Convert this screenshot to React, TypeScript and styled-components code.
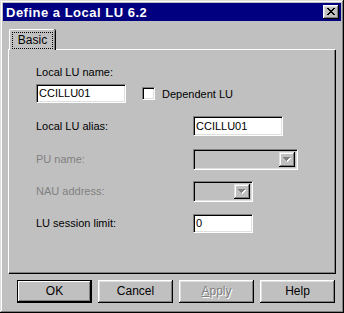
import React from 'react';
import styled, { createGlobalStyle } from 'styled-components';

const GlobalStyle = createGlobalStyle`
    html, body {
        margin: 0;
        padding: 0;
        background: #c0c0c0;
    }
    * {
        box-sizing: border-box;
    }
`;

const FONT = `'Liberation Sans', Arial, sans-serif`;

const Window = styled.div`
    width: 344px;
    height: 313px;
    padding: 3px;
    background: #c0c0c0;
    font-family: ${FONT};
    font-size: 11px;
    color: #000;
    box-shadow: inset -1px -1px #000, inset 1px 1px #dfdfdf, inset -2px -2px #808080, inset 2px 2px #fff;
    display: flex;
    flex-direction: column;
`;

const TitleBar = styled.div`
    height: 18px;
    background: #000080;
    color: #fff;
    font-weight: bold;
    font-size: 13px;
    letter-spacing: 0.5px;
    display: flex;
    align-items: center;
    justify-content: space-between;
    padding: 0 2px 0 3px;
`;

const CloseButton = styled.div`
    width: 16px;
    height: 14px;
    background: #c0c0c0;
    box-shadow: inset -1px -1px #000, inset 1px 1px #fff, inset -2px -2px #808080, inset 2px 2px #dfdfdf;
    display: flex;
    align-items: center;
    justify-content: center;
    padding: 0 1px 1px 0;
`;

const Body = styled.div`
    padding: 8px 6px 0 5px;
`;

const TabStrip = styled.div`
    display: flex;
    padding-left: 1px;
    position: relative;
    z-index: 1;
    margin-bottom: -1px;
`;

const Tab = styled.div`
    width: 46px;
    height: 21px;
    background: #c0c0c0;
    border-top: 1px solid #fff;
    border-left: 1px solid #fff;
    border-top-left-radius: 2px;
    border-top-right-radius: 2px;
    box-shadow: inset -1px 0 #808080, 1px 0 #000;
    padding: 2px 2px 0 2px;
    font-size: 12px;
`;

const TabFocus = styled.div`
    border: 1px dotted #000;
    height: 17px;
    display: flex;
    align-items: center;
    justify-content: center;
    padding-bottom: 1px;
`;

const Panel = styled.div`
    width: 327px;
    height: 224px;
    border-top: 1px solid #fff;
    border-left: 1px solid #fff;
    box-shadow: inset -1px -1px #808080, 1px 1px #000;
    padding: 16px 0 0 27px;
`;

const FieldLabel = styled.div<{ $disabled?: boolean }>`
    height: 13px;
    line-height: 13px;
    color: ${(p) => (p.$disabled ? '#808080' : '#000')};
    white-space: nowrap;
`;

const Row = styled.div<{ $h: number; $top: number }>`
    display: grid;
    grid-template-columns: 157px auto;
    align-items: center;
    height: ${(p) => p.$h}px;
    margin-top: ${(p) => p.$top}px;
`;

const InlineRow = styled.div`
    display: flex;
    align-items: center;
    height: 19px;
    margin-top: 5px;
`;

const TextBox = styled.div<{ $w: number; $h: number }>`
    width: ${(p) => p.$w}px;
    height: ${(p) => p.$h}px;
    background: #fff;
    border: 1px solid;
    border-color: #808080 #fff #fff #808080;
    box-shadow: inset 1px 1px #000, inset -1px -1px #dfdfdf;
    padding: 0 0 0 2px;
    display: flex;
    align-items: center;
    line-height: 13px;
`;

const Combo = styled.div<{ $w: number }>`
    width: ${(p) => p.$w}px;
    height: 21px;
    background: #c0c0c0;
    border: 1px solid;
    border-color: #808080 #fff #fff #808080;
    box-shadow: inset 1px 1px #000, inset -1px -1px #dfdfdf;
    display: flex;
    justify-content: flex-end;
    padding: 2px;
`;

const ComboArrow = styled.div`
    width: 16px;
    height: 15px;
    background: #c0c0c0;
    box-shadow: inset -1px -1px #000, inset 1px 1px #dfdfdf, inset -2px -2px #808080, inset 2px 2px #fff;
    display: flex;
    align-items: center;
    justify-content: center;
`;

const CheckBox = styled.div`
    width: 13px;
    height: 13px;
    background: #fff;
    border: 1px solid;
    border-color: #808080 #fff #fff #808080;
    box-shadow: inset 1px 1px #000, inset -1px -1px #dfdfdf;
    margin: 0 7px 0 16px;
`;

const ButtonRow = styled.div`
    display: flex;
    gap: 6px;
    padding: 7px 0 0 9px;
`;

const Button = styled.div<{ $default?: boolean; $disabled?: boolean }>`
    width: 75px;
    height: 23px;
    background: #c0c0c0;
    display: flex;
    align-items: center;
    justify-content: center;
    padding-bottom: 1px;
    font-size: 12px;
    color: ${(p) => (p.$disabled ? '#808080' : '#000')};
    text-shadow: ${(p) => (p.$disabled ? '1px 1px #fff' : 'none')};
    box-shadow: ${(p) =>
        p.$default
            ? 'inset 0 0 0 1px #000, inset -2px -2px #000, inset 2px 2px #fff, inset -3px -3px #808080'
            : 'inset -1px -1px #000, inset 1px 1px #fff, inset -2px -2px #808080, inset 2px 2px #dfdfdf'};
`;

const Mnemonic = styled.span`
    text-decoration: underline;
`;

const CloseGlyph = () => (
    <svg width="8" height="7" viewBox="0 0 8 7" shapeRendering="crispEdges">
        <path
            d="M0 0h2v1h-2zM6 0h2v1h-2zM1 1h2v1h-2zM5 1h2v1h-2zM2 2h4v1h-4zM3 3h2v1h-2zM2 4h4v1h-4zM1 5h2v1h-2zM5 5h2v1h-2zM0 6h2v1h-2zM6 6h2v1h-2z"
            fill="#000"
        />
    </svg>
);

const DisabledArrow = () => (
    <svg width="8" height="5" viewBox="0 0 8 5" shapeRendering="crispEdges">
        <path d="M1 1h7v1h-7zM2 2h5v1h-5zM3 3h3v1h-3zM4 4h1v1h-1z" fill="#fff" />
        <path d="M0 0h7v1h-7zM1 1h5v1h-5zM2 2h3v1h-3zM3 3h1v1h-1z" fill="#808080" />
    </svg>
);

const App = () => {
    return (
        <>
            <GlobalStyle />
            <Window>
                <TitleBar>
                    <span>Define a Local LU 6.2</span>
                    <CloseButton>
                        <CloseGlyph />
                    </CloseButton>
                </TitleBar>
                <Body>
                    <TabStrip>
                        <Tab>
                            <TabFocus>Basic</TabFocus>
                        </Tab>
                    </TabStrip>
                    <Panel>
                        <FieldLabel>Local LU name:</FieldLabel>
                        <InlineRow>
                            <TextBox $w={90} $h={19}>CCILLU01</TextBox>
                            <CheckBox />
                            <span>Dependent LU</span>
                        </InlineRow>
                        <Row $h={20} $top={13}>
                            <FieldLabel>Local LU alias:</FieldLabel>
                            <TextBox $w={90} $h={20}>CCILLU01</TextBox>
                        </Row>
                        <Row $h={21} $top={13}>
                            <FieldLabel $disabled>PU name:</FieldLabel>
                            <Combo $w={105}>
                                <ComboArrow>
                                    <DisabledArrow />
                                </ComboArrow>
                            </Combo>
                        </Row>
                        <Row $h={21} $top={11}>
                            <FieldLabel $disabled>NAU address:</FieldLabel>
                            <Combo $w={60}>
                                <ComboArrow>
                                    <DisabledArrow />
                                </ComboArrow>
                            </Combo>
                        </Row>
                        <Row $h={19} $top={12}>
                            <FieldLabel>LU session limit:</FieldLabel>
                            <TextBox $w={60} $h={19}>0</TextBox>
                        </Row>
                    </Panel>
                    <ButtonRow>
                        <Button $default>OK</Button>
                        <Button>Cancel</Button>
                        <Button $disabled>
                            <span>
                                <Mnemonic>A</Mnemonic>pply
                            </span>
                        </Button>
                        <Button>Help</Button>
                    </ButtonRow>
                </Body>
            </Window>
        </>
    );
};

export default App;
